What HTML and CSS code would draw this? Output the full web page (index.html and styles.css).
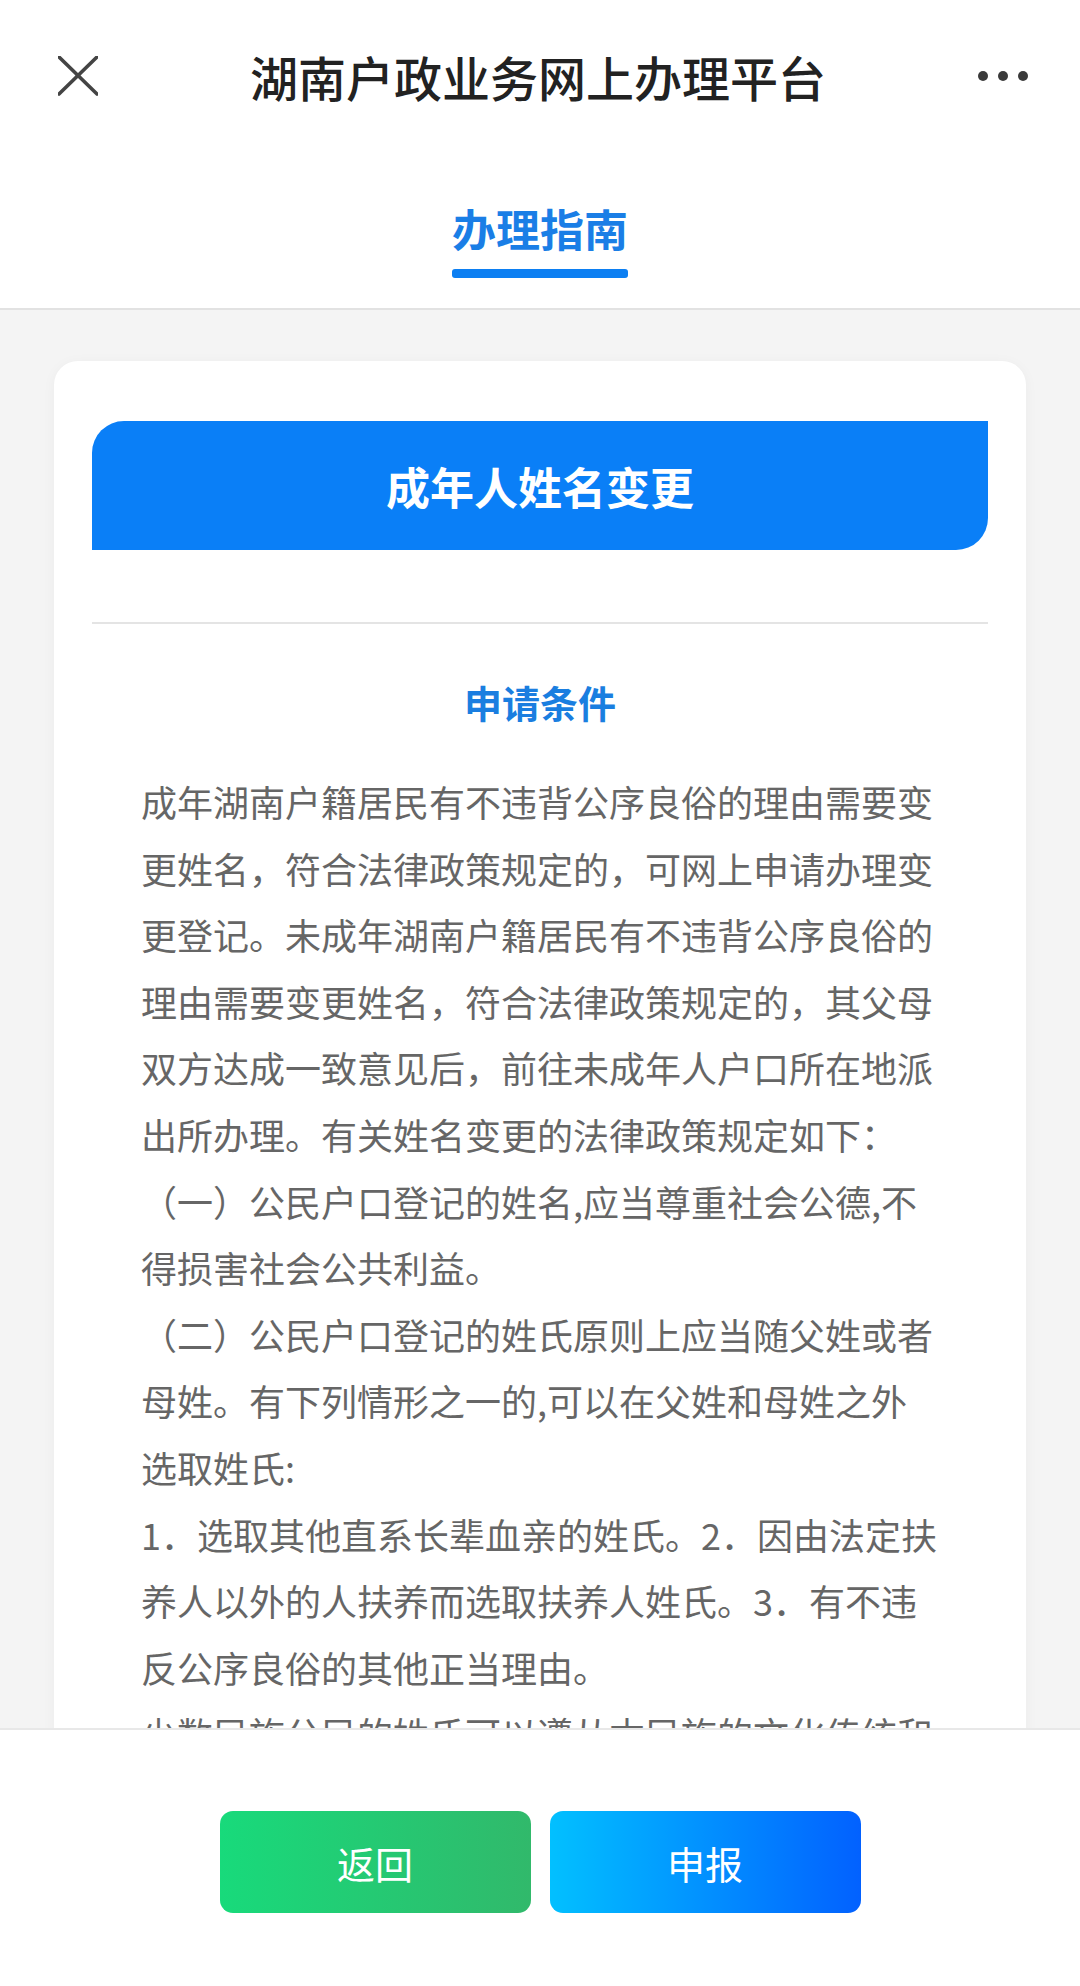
FILE: index.html
```html
<!DOCTYPE html>
<html lang="zh-CN">
<head>
    <meta charset="UTF-8">
    <meta name="viewport" content="width=device-width, initial-scale=1.0">
    <title>湖南户政业务网上办理平台</title>
    <link rel="stylesheet" href="styles.css">
</head>
<body>
    <div class="page">
        <div class="header">
            <div class="nav-bar">
                <span class="nav-close">
                    <svg width="40" height="40" viewBox="0 0 40 40">
                        <path d="M1 1 L39 38 M39 1 L1 38" stroke="#444" stroke-width="3.6" stroke-linecap="round" fill="none"/>
                    </svg>
                </span>
                <h1 class="nav-title">湖南户政业务网上办理平台</h1>
                <span class="nav-more">
                    <i></i><i></i><i></i>
                </span>
            </div>
            <div class="tab-bar">
                <span class="tab active">办理指南</span>
            </div>
        </div>

        <div class="content">
            <div class="card">
                <div class="card-banner">成年人姓名变更</div>
                <div class="card-divider"></div>
                <h2 class="section-title">申请条件</h2>
                <div class="section-text">
                    <p>成年湖南户籍居民有不违背公序良俗的理由需要变更姓名，符合法律政策规定的，可网上申请办理变更登记。未成年湖南户籍居民有不违背公序良俗的理由需要变更姓名，符合法律政策规定的，其父母双方达成一致意见后，前往未成年人户口所在地派出所办理。有关姓名变更的法律政策规定如下：</p>
                    <p>（一）公民户口登记的姓名,应当尊重社会公德,不得损害社会公共利益。</p>
                    <p>（二）公民户口登记的姓氏原则上应当随父姓或者母姓。有下列情形之一的,可以在父姓和母姓之外选取姓氏:</p>
                    <p>1．选取其他直系长辈血亲的姓氏。2．因由法定扶养人以外的人扶养而选取扶养人姓氏。3．有不违反公序良俗的其他正当理由。</p>
                    <p>少数民族公民的姓氏可以遵从本民族的文化传统和风俗习惯。</p>
                </div>
            </div>
        </div>

        <div class="footer">
            <button class="btn btn-back">返回</button>
            <button class="btn btn-apply">申报</button>
        </div>
    </div>
</body>
</html>
```

FILE: styles.css
```css
* {
    box-sizing: border-box;
}

body {
    margin: 0;
    font-family: "Noto Sans CJK SC", "Noto Sans", sans-serif;
    background: #f4f4f4;
    color: #333;
}

.page {
    width: 1080px;
    height: 1986px;
    display: flex;
    flex-direction: column;
    overflow: hidden;
}

/* header */

.header {
    background: white;
    border-bottom: 2px solid #e2e2e2;
    flex-shrink: 0;
}

.nav-bar {
    height: 152px;
    display: flex;
    align-items: center;
    justify-content: space-between;
    padding: 0 52px 0 58px;
}

.nav-close {
    width: 40px;
    height: 40px;
    display: flex;
}

.nav-title {
    margin: 0;
    font-size: 48px;
    font-weight: 500;
    color: #222;
}

.nav-more {
    display: flex;
    gap: 10px;
    width: 50px;
}

.nav-more i {
    width: 10px;
    height: 10px;
    border-radius: 50%;
    background: #3a3a3a;
}

.tab-bar {
    display: flex;
    justify-content: center;
    padding: 51px 0 30px;
}

.tab {
    font-size: 44px;
    font-weight: 700;
    line-height: 50px;
    color: #1a7ee6;
    display: inline-block;
}

.tab.active::after {
    content: "";
    display: block;
    height: 9px;
    margin-top: 16px;
    border-radius: 3px;
    background: #0c7ff2;
}

/* content */

.content {
    flex: 1;
    overflow: hidden;
    padding: 51px 54px 0;
}

.card {
    background: white;
    border-radius: 24px;
    padding: 60px 38px;
    box-shadow: 0 2px 14px rgba(0, 0, 0, 0.04);
}

.card-banner {
    height: 129px;
    display: flex;
    align-items: center;
    justify-content: center;
    background: #0a7ff7;
    color: white;
    font-size: 44px;
    font-weight: 700;
    border-radius: 32px 0 32px 0;
}

.card-divider {
    height: 2px;
    background: #e4e4e4;
    margin-top: 72px;
}

.section-title {
    margin: 53px 0 0;
    text-align: center;
    font-size: 38px;
    line-height: 50px;
    font-weight: 700;
    color: #1a7ee0;
}

.section-text {
    margin-top: 41px;
    padding-left: 49px;
    width: 850px;
    font-size: 36px;
    line-height: 66.6px;
    color: #666;
}

.section-text p {
    margin: 0;
}

/* footer */

.footer {
    flex-shrink: 0;
    height: 258px;
    background: white;
    border-top: 2px solid #e8e8e8;
    display: flex;
    justify-content: center;
    gap: 19px;
    padding-top: 81px;
}

.btn {
    width: 311px;
    height: 102px;
    border: none;
    border-radius: 13px;
    color: white;
    font-family: inherit;
    font-size: 38px;
    font-weight: 400;
    cursor: pointer;
}

.btn-back {
    background: linear-gradient(90deg, #18da7b, #31b96b);
}

.btn-apply {
    background: linear-gradient(90deg, #02c0ff, #0261ff);
}
```
